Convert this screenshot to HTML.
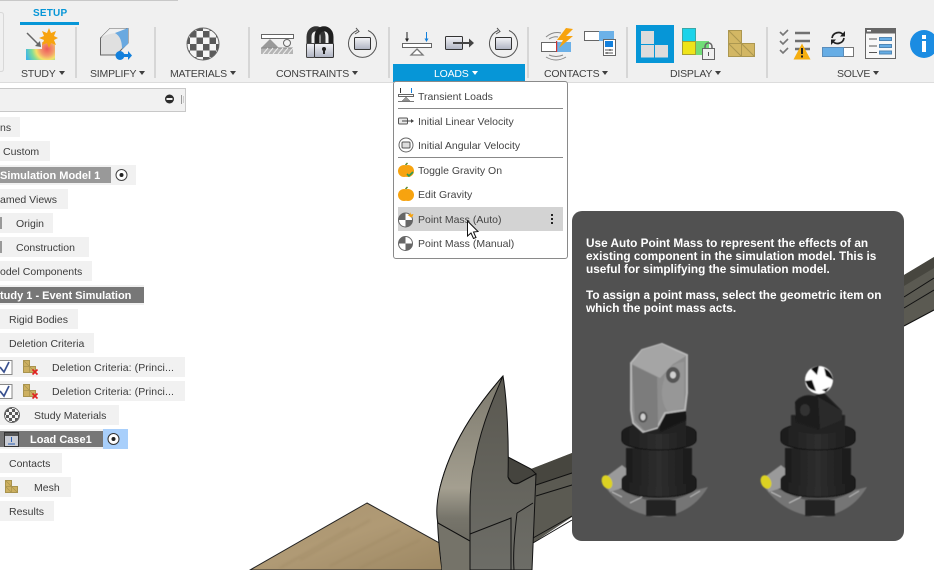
<!DOCTYPE html>
<html><head><meta charset="utf-8"><style>
html,body{margin:0;padding:0;background:#fff;width:934px;height:570px;overflow:hidden}
body{position:relative;font-family:"Liberation Sans",sans-serif;color:#3c3c3c}
svg.l{position:absolute;left:0;top:0}
.t{position:absolute;white-space:nowrap;line-height:14px;font-size:11px}
.lab{position:absolute;top:67px;font-size:10.5px;letter-spacing:-.2px;line-height:12px;color:#3f3f3f;white-space:nowrap;text-align:center}
.lab i{display:inline-block;width:0;height:0;border:3.5px solid transparent;border-top:4px solid currentColor;border-bottom:0;margin-left:3px;vertical-align:2px}
.r{position:absolute;left:0;height:20px;background:#f1f1f1}
.r span{position:absolute;top:4px;font-size:10.5px;line-height:14px;white-space:nowrap;color:#3c3c3c}
.b{position:absolute;left:0}
.b span{font-weight:bold;color:#fff!important}
.m{position:absolute;left:418px;font-size:10.5px;line-height:14px;color:#444;white-space:nowrap}
#tip{position:absolute;left:572px;top:211px;width:332px;height:330px;background:#515151;border-radius:10px}
#tip div{position:absolute;left:14px;font-weight:bold;font-size:11.8px;line-height:13px;color:#fff;white-space:nowrap}
</style></head><body>

<svg class="l" width="934" height="570" viewBox="0 0 934 570">
<defs>
<linearGradient id="wood" x1="0" y1="0" x2="1" y2="1"><stop offset="0" stop-color="#a9946f"/><stop offset=".5" stop-color="#b09a75"/><stop offset="1" stop-color="#9c8762"/></linearGradient>
<linearGradient id="ham" x1="0" y1="0" x2="0" y2="1"><stop offset="0" stop-color="#7b786c"/><stop offset=".68" stop-color="#a49f90"/><stop offset=".86" stop-color="#77756b"/><stop offset="1" stop-color="#6e6c63"/></linearGradient>
<linearGradient id="ham2" x1="0" y1="0" x2="0" y2="1"><stop offset="0" stop-color="#5a5850"/><stop offset="1" stop-color="#6d6d67"/></linearGradient>
<filter id="bw"><feGaussianBlur stdDeviation="1.200"/></filter>
</defs>
<!-- wood -->
<path d="M367 503 L250 570 L445 570 L445 546 Z" fill="url(#wood)" stroke="#222" stroke-width="1"/>
<g stroke="#96815c" stroke-width="1.500" opacity=".45" fill="none" filter="url(#bw)"><path d="M300 560 L370 520M330 566 L400 530M360 568 L420 540M280 568 L350 528"/></g>
<!-- handle -->
<path d="M531 469 L572 453 L904 275 L934 257 L934 310 L904 326 L572 517 L533 543 Z" fill="#5b5a52"/>
<path d="M531 469 L572 453 L904 275 L934 257 L934 268 L904 286 L572 473 L536 485 Z" fill="#47463f"/>
<path d="M536 485 L572 473M536 496 L572 485M533 538 L572 516M533 543 L572 520M904 297 L934 278M904 308 L934 290M904 326 L934 310" stroke="#111" stroke-width="1" fill="none"/>
<!-- block -->
<path d="M508 457 L531 469 L536 474 L519 483 L513 484 L508 477 Z" fill="#45443e" stroke="#111"/>
<!-- head -->
<path d="M503 376 C482 400 455 435 442 480 C436 500 436 525 442 570 L532 570 L536 474 L519 483 C515 485 510 483 508 477 C509 440 507 400 503 376 Z" fill="url(#ham2)" stroke="#111" stroke-width="1"/>
<path d="M438 523L470 541V570H442Z" fill="#757369"/>
<path d="M503 376 C482 400 455 435 442 480 C436 500 436 515 438 523 L470 541 V507 C470 490 472 470 474 465 C479 435 488 410 503 376 Z" fill="url(#ham)" stroke="#111" stroke-width="1"/>
<path d="M438 523 L470 541 V570M470 534 L511 518 V570M517 513 L533 503M517 513 C514 540 513 555 514 570" stroke="#111" stroke-width="1" fill="none"/>

<!-- toolbar -->
<rect x="0" y="0" width="934" height="82" fill="#f0f0f0"/>
<rect x="0" y="82" width="934" height="1" fill="#dcdcdc"/>
<rect x="0" y="0" width="178" height="1" fill="#c8c8c8"/>
<path d="M0 12.5H1Q3.500 12.500 3.500 15V69Q3.500 71.500 1 71.500H0" fill="none" stroke="#d8d8d8"/>
<rect x="20" y="22" width="59" height="3" fill="#0696d7"/>
<g fill="#d6d6d6"><rect x="75" y="27" width="2" height="51"/><rect x="154" y="27" width="2" height="51"/><rect x="248" y="27" width="2" height="51"/><rect x="388" y="27" width="2" height="51"/><rect x="527" y="27" width="2" height="51"/><rect x="626" y="27" width="2" height="51"/><rect x="766" y="27" width="2" height="51"/></g>
<rect x="393" y="64" width="132" height="18" fill="#0696d7"/>

<!-- study -->
<defs><radialGradient id="heat" gradientUnits="userSpaceOnUse" cx="47" cy="49" r="22"><stop offset="0" stop-color="#ee5a5a"/><stop offset=".3" stop-color="#f39a6b"/><stop offset=".5" stop-color="#f4e26a"/><stop offset=".7" stop-color="#7fdc9a"/><stop offset="1" stop-color="#3fb6e6"/></radialGradient></defs>
<path d="M26 49H42V42H55V60H26Z" fill="url(#heat)"/>
<path d="M49 28l2 5 5-2-2 5 4 2-4 2 2 5-5-2-2 5-2-5-5 2 2-5-5-2 5-2-2-5 5 2z" fill="#f7a30f"/>
<path d="M27 33L39 45" stroke="#666" stroke-width="1.500"/><path d="M41 47L40 41L35 46Z" fill="#666"/>
<!-- simplify -->
<path d="M100.500 38L110 28.500H128V43L116 55H100.500Z" fill="#e0e0e0" stroke="#666"/>
<path d="M110 28.500H128L115 33C110 34 104 35 100.500 38Z" fill="#f0f0f0"/>
<path d="M115 33L128 28V44L122 49C122 41 120 36 115 33Z" fill="#6aa9e0"/>
<circle cx="120" cy="55.500" r="4.500" fill="#1380dc"/><path d="M124 54H128V51L132 55.500L128 60V57H124Z" fill="#1380dc"/>
<!-- materials -->
<defs><pattern id="chk" width="13" height="13" patternUnits="userSpaceOnUse" x="196.500" y="37.500"><rect width="13" height="13" fill="#f5f5f5"/><rect width="6.500" height="6.500" fill="#5a5a5a"/><rect x="6.500" y="6.500" width="6.500" height="6.500" fill="#5a5a5a"/></pattern>
<pattern id="chks" width="6" height="6" patternUnits="userSpaceOnUse" x="9" y="412"><rect width="6" height="6" fill="#f5f5f5"/><rect width="3" height="3" fill="#5a5a5a"/><rect x="3" y="3" width="3" height="3" fill="#5a5a5a"/></pattern></defs>
<circle cx="203" cy="44" r="16" fill="url(#chk)" stroke="#666"/>
<!-- constraint 1 -->
<rect x="261.500" y="34.500" width="32" height="4" fill="#fff" stroke="#666"/>
<path d="M270 39L279 48H261Z" fill="#999"/><circle cx="287" cy="43" r="3.500" fill="#f4f4f4" stroke="#666"/>
<rect x="261" y="48" width="32" height="6" fill="#b5b5b5"/>
<path d="M261 48H293" stroke="#888"/>
<path d="M263 54l5-6M268 54l5-6M273 54l5-6M278 54l5-6M283 54l5-6M288 54l5-6" stroke="#eee"/>
<!-- lock -->
<path d="M309 44V37C309 26 323 26 323 37V44" fill="none" stroke="#333" stroke-width="5"/>
<path d="M317 44V37C317 26 331 26 331 37V44" fill="none" stroke="#1f1f1f" stroke-width="5"/>
<rect x="306.500" y="43.500" width="8" height="14" rx="1" fill="url(#g1)" stroke="#444"/>
<rect x="314.500" y="43.500" width="19" height="14" rx="1" fill="url(#g1)" stroke="#333"/>
<circle cx="324" cy="49" r="2" fill="#222"/><rect x="323" y="49" width="2" height="5" fill="#222"/>
<!-- rot -->
<defs><linearGradient id="g1" x1="0" y1="0" x2="0" y2="1"><stop offset="0" stop-color="#f4f4f7"/><stop offset="1" stop-color="#aeb3c2"/></linearGradient></defs>
<g id="rot"><path d="M357 30.500A14 14 0 1 0 368 30.500M367 30.500" fill="none" stroke="#555"/><path d="M356 28L359 31.500L355 34" fill="none" stroke="#555"/><rect x="354.500" y="37.500" width="16" height="12" rx="1" fill="url(#g1)" stroke="#333"/></g>
<!-- loads -->
<path d="M407 32V40M426.500 32V40" stroke="#333"/><path d="M407 32V39" stroke="#222"/><path d="M426.500 32V39" stroke="#1380dc"/>
<path d="M405 38.500L407 42L409 38.500Z" fill="#222"/><path d="M424.500 38.500L426.500 42L428.500 38.500Z" fill="#1380dc"/>
<rect x="402.500" y="43.500" width="29" height="4" fill="#fff" stroke="#666"/>
<path d="M417 49L423 55H411Z" fill="#fff" stroke="#777" stroke-width="1.300"/>
<rect x="445.500" y="36.500" width="17" height="13" rx="1" fill="url(#g1)" stroke="#333"/>
<path d="M453 43H470" stroke="#444" stroke-width="2"/><path d="M469 38.500L474 43L469 47.500Z" fill="#444"/>
<use href="#rot" x="141"/>
<!-- contacts -->
<path d="M546 37Q553 31 561 33M549 39Q554 36 558 37M546 57Q556 63 566 57M549 55Q556 58 563 55" fill="none" stroke="#888"/>
<rect x="541.500" y="42.500" width="15" height="9" fill="#fff" stroke="#666"/>
<rect x="557" y="42" width="14" height="10" fill="#6cb1e8"/>
<rect x="556" y="41" width="1.200" height="11" fill="#d03030"/>
<path d="M566 28L557 40H563L559 48L573 36H566L573 29Z" fill="#f7a30f"/>
<rect x="584.500" y="31.500" width="15" height="9" fill="#fff" stroke="#666"/>
<rect x="599" y="31" width="15" height="10" fill="#6cb1e8"/>
<rect x="603.500" y="39.500" width="12" height="16" fill="#fff" stroke="#666"/>
<rect x="605" y="41" width="8" height="6" fill="#1380dc"/>
<path d="M605 50H613M605 53H613" stroke="#555"/><path d="M610 49V51M607 52V54" stroke="#555"/>
<!-- display -->
<rect x="636" y="25" width="38" height="38" fill="#0696d7"/>
<rect x="641" y="31" width="13" height="13" fill="#dcdcdc"/><rect x="641" y="45" width="13" height="12.500" fill="#dcdcdc"/><rect x="655" y="45" width="13" height="12.500" fill="#dcdcdc"/>
<rect x="682.500" y="28.500" width="13" height="13" fill="#1cd3ea" stroke="#3aa7a7"/>
<rect x="682.500" y="41.500" width="13" height="13" fill="#efe41a" stroke="#a8a030"/>
<rect x="696" y="41" width="13" height="14" fill="#72dd78"/>
<path d="M705 49V47C705 41.500 712 41.500 712 47V49" fill="none" stroke="#666" stroke-width="1.500"/>
<rect x="702.500" y="48.500" width="12" height="11" fill="#f0f0f0" stroke="#666"/>
<rect x="708" y="52" width="1" height="4" fill="#555"/>
<g id="msh"><path d="M728.500 30.500H741.500V43.500H754.500V56.500H728.500Z" fill="#d3b764" stroke="#ac9750"/><path d="M728.500 43.500H741.500V56.500M728.500 30.500L741.500 43.500M728.500 43.500L741.500 56.500M741.500 43.500L754.500 56.500" fill="none" stroke="#ac9750"/></g>
<!-- solve -->
<path d="M780 32L783 35L788 30M780 41L783 44L788 39M780 50L783 53L788 48" fill="none" stroke="#777" stroke-width="1.600"/>
<path d="M795 33H810M795 41H810M795 49H810" stroke="#707070" stroke-width="2.400"/>
<path d="M802 43.500L810.500 59.500H793.500Z" fill="#f5ae10"/><rect x="801" y="48" width="2" height="6" fill="#222"/><rect x="801" y="55.500" width="2" height="2" fill="#222"/>
<path d="M832 38A6.500 6.500 0 0 1 843.500 35M844 38A6.500 6.500 0 0 1 832.500 41" fill="none" stroke="#222" stroke-width="1.700"/>
<path d="M845 31V36.500H840ZM831 45V39.500H836Z" fill="#222"/>
<rect x="822.500" y="47.500" width="31" height="9" fill="#fff" stroke="#777"/><rect x="822.500" y="47.500" width="21" height="9" fill="#66ade5" stroke="#5a8dbb"/>
<rect x="865.500" y="28.500" width="30" height="30" fill="#f8f8f8" stroke="#666"/><rect x="865" y="28" width="31" height="5.500" fill="#666"/><rect x="867" y="30" width="4" height="1.500" fill="#fff"/>
<path d="M869 39H877M869 46H877M869 52.500H877" stroke="#555"/>
<g fill="#66ade5" stroke="#4f86b5"><rect x="879.500" y="37.500" width="12" height="3"/><rect x="879.500" y="44.500" width="12" height="3"/><rect x="879.500" y="51" width="12" height="3"/></g>
<circle cx="924" cy="44" r="14" fill="#1b8ce2"/><rect x="922" y="41" width="4" height="11" fill="#fff"/><rect x="922" y="35" width="4" height="4" fill="#fff"/>

<!-- panel header -->
<rect x="-2" y="88.500" width="187.500" height="23" fill="#f1f1f1" stroke="#c8c8c8"/>
<circle cx="169.500" cy="99" r="4.500" fill="#2b2b2b"/><rect x="166.500" y="98" width="6" height="2" fill="#f1f1f1"/>
<path d="M181.500 95V104" stroke="#999"/><path d="M183.500 96V103" stroke="#ccc"/>
</svg>

<div class="t" style="left:33px;top:6px;font-size:10px;font-weight:bold;color:#0696d7;letter-spacing:.2px;margin-top:1px">SETUP</div>
<div class="lab" style="left:21px;top:68px">STUDY<i></i></div>
<div class="lab" style="left:90px;top:68px">SIMPLIFY<i></i></div>
<div class="lab" style="left:170px;top:68px">MATERIALS<i></i></div>
<div class="lab" style="left:276px;top:68px">CONSTRAINTS<i></i></div>
<div class="lab" style="left:434px;top:68px;color:#fff">LOADS<i></i></div>
<div class="lab" style="left:544px;top:68px">CONTACTS<i></i></div>
<div class="lab" style="left:670px;top:68px">DISPLAY<i></i></div>
<div class="lab" style="left:837px;top:68px">SOLVE<i></i></div>

<!-- tree -->
<div class="r" style="top:117px;width:20px"><span style="left:0">ns</span></div>
<div class="r" style="top:141px;width:50px"><span style="left:3px">Custom</span></div>
<div class="r" style="top:165px;width:136px"></div>
<div class="b" style="top:167px;width:111px;height:16px;background:#999"><span class="t" style="left:0;top:2px">Simulation Model 1</span></div>
<div class="r" style="top:189px;width:68px"><span style="left:0">amed Views</span></div>
<div class="r" style="top:213px;width:53px"><span style="left:16px">Origin</span></div>
<div class="r" style="top:237px;width:89px"><span style="left:16px">Construction</span></div>
<div class="r" style="top:261px;width:92px"><span style="left:0">odel Components</span></div>
<div class="r" style="top:285px;width:144px"></div>
<div class="b" style="top:287px;width:144px;height:16px;background:#777"><span class="t" style="left:0;top:2px">tudy 1 - Event Simulation</span></div>
<div class="r" style="top:309px;width:78px"><span style="left:9px">Rigid Bodies</span></div>
<div class="r" style="top:333px;width:94px"><span style="left:9px">Deletion Criteria</span></div>
<div class="r" style="top:357px;width:185px"><span style="left:52px;letter-spacing:.08px">Deletion Criteria: (Princi...</span></div>
<div class="r" style="top:381px;width:185px"><span style="left:52px;letter-spacing:.08px">Deletion Criteria: (Princi...</span></div>
<div class="r" style="top:405px;width:119px"><span style="left:34px">Study Materials</span></div>
<div class="r" style="top:429px;width:103px"></div>
<div class="b" style="top:429px;left:103px;width:25px;height:20px;background:#a8cffb"></div>
<div class="b" style="top:431px;width:103px;height:16px;background:#777"><span class="t" style="left:30px;top:2px">Load Case1</span></div>
<div class="r" style="top:453px;width:62px"><span style="left:9px">Contacts</span></div>
<div class="r" style="top:477px;width:71px"><span style="left:34px">Mesh</span></div>
<div class="r" style="top:501px;width:54px"><span style="left:9px">Results</span></div>

<svg class="l" width="200" height="570" viewBox="0 0 200 570">
<rect x="0" y="217" width="2" height="12" fill="#999"/><rect x="0" y="241" width="2" height="12" fill="#999"/>
<circle cx="121.500" cy="175" r="5.500" fill="#fff" stroke="#444"/><circle cx="121.500" cy="175" r="2" fill="#222"/>
<circle cx="113.500" cy="439" r="5.500" fill="#fff" stroke="#333"/><circle cx="113.500" cy="439" r="2" fill="#222"/>
<g id="cb"><rect x="-2" y="360.500" width="14" height="14" fill="#fff" stroke="#888"/><path d="M0 367L4 372L9 362" fill="none" stroke="#39508f" stroke-width="1.700"/></g>
<use href="#cb" y="24"/>
<g id="dc"><path d="M23.500 360.500H29.500V366.500H35.500V372.500H23.500Z" fill="#cdb060" stroke="#a8934e"/><path d="M23.500 366.500H29.500V372.500M23.500 360.500L29.500 366.500M29.500 366.500L35.500 372.500" fill="none" stroke="#a8934e" stroke-width=".7"/><path d="M32.500 369.500L37.500 374.500M37.500 369.500L32.500 374.500" stroke="#e02020" stroke-width="1.600"/></g>
<use href="#dc" y="24"/>
<circle cx="12" cy="415" r="7.500" fill="url(#chks)" stroke="#666"/>
<rect x="4.500" y="432.500" width="14" height="14" fill="#c9ccd4" stroke="#333"/><rect x="5" y="433" width="13" height="3" fill="#555"/>
<path d="M11.500 437V442M8 444H15" stroke="#2a5fb5"/>
<path d="M5.500 480.500H11.500V486.500H17.500V492.500H5.500Z" fill="#cdb060" stroke="#a8934e"/><path d="M5.500 486.500H11.500V492.500M5.500 480.500L11.500 486.500M5.500 486.500L11.500 492.500M11.500 486.500L17.500 492.500" fill="none" stroke="#a8934e" stroke-width=".7"/>
</svg>

<!-- menu -->
<div style="position:absolute;left:393px;top:81px;width:173px;height:176px;background:#fff;border:1px solid #8a8a8a;border-radius:3px"></div>
<div style="position:absolute;left:398px;top:207px;width:165px;height:24px;background:#d3d3d3"></div>
<div style="position:absolute;left:398px;top:108px;width:165px;height:1px;background:#888"></div>
<div style="position:absolute;left:398px;top:157px;width:165px;height:1px;background:#888"></div>
<div class="m" style="top:90px">Transient Loads</div>
<div class="m" style="top:115px">Initial Linear Velocity</div>
<div class="m" style="top:139px">Initial Angular Velocity</div>
<div class="m" style="top:164px">Toggle Gravity On</div>
<div class="m" style="top:188px">Edit Gravity</div>
<div class="m" style="top:213px">Point Mass (Auto)</div>
<div class="m" style="top:237px">Point Mass (Manual)</div>
<svg class="l" width="600" height="270" viewBox="0 0 600 270">
<path d="M400.500 88V93M411.500 88V93" stroke="#333"/><path d="M411.500 88V93" stroke="#1380dc"/>
<rect x="398.500" y="94.500" width="15" height="2" fill="#fff" stroke="#666"/><path d="M406 97L410 101H402Z" fill="#999" stroke="#666" stroke-width=".5"/><rect x="398" y="101" width="16" height="1" fill="#777"/>
<rect x="398.500" y="118" width="9" height="6" rx="1" fill="#e8e8e8" stroke="#555"/><path d="M402 121H411" stroke="#444"/><path d="M411 119L414 121L411 123Z" fill="#444"/>
<circle cx="406" cy="145" r="7" fill="none" stroke="#666"/><rect x="402" y="142" width="8" height="6" rx="1" fill="#ddd" stroke="#555"/>
<g id="ap"><circle cx="404" cy="171" r="6" fill="#f7a30f"/><circle cx="408" cy="171" r="6" fill="#f7a30f"/><path d="M405.500 165L407.500 163" stroke="#5b8a2e" stroke-width="1.500"/></g>
<path d="M407 174L409 176L413 172" fill="none" stroke="#2a9a55" stroke-width="1.600"/>
<use href="#ap" y="24"/>
<circle cx="405.500" cy="220" r="7" fill="#fff" stroke="#666"/><path d="M405.500 220H398.500A7 7 0 0 1 405.500 213ZM405.500 220H412.500A7 7 0 0 1 405.500 227Z" fill="#666"/>
<path d="M410 212l1 2.500 2.500-.5-1 2.500-1.500 1-2-1.500-1.500-1 2.500-.5z" fill="#f7a30f"/>
<circle cx="405.500" cy="243.500" r="7" fill="#fff" stroke="#666"/><path d="M405.500 243.500H398.500A7 7 0 0 1 405.500 236.500ZM405.500 243.500H412.500A7 7 0 0 1 405.500 250.500Z" fill="#666"/>
<g fill="#222"><rect x="551" y="214" width="2" height="2"/><rect x="551" y="218" width="2" height="2"/><rect x="551" y="222" width="2" height="2"/></g>
<path d="M467.500 221V236L471 233L473.500 238.500L476 237.500L473.500 232L478 231.500Z" fill="#fff" stroke="#111"/>
</svg>

<!-- tooltip -->
<div id="tip">
<div style="top:26px">Use Auto Point Mass to represent the effects of an</div>
<div style="top:39px">existing component in the simulation model. This is</div>
<div style="top:52px">useful for simplifying the simulation model.</div>
<div style="top:78px">To assign a point mass, select the geometric item on</div>
<div style="top:91px">which the point mass acts.</div>
</div>
<svg class="l" width="934" height="570" viewBox="0 0 934 570">
<defs>
<filter id="bl"><feGaussianBlur stdDeviation=".6"/></filter>
<linearGradient id="bd" x1="0" y1="0" x2="1" y2="0"><stop offset="0" stop-color="#1c1c1c"/><stop offset=".5" stop-color="#2e2e2e"/><stop offset="1" stop-color="#1a1a1a"/></linearGradient>
<g id="act" filter="url(#bl)">
<path d="M603 484L622 490Q660 512 696 490L708 487Q692 514 660 517Q624 515 603 484Z" fill="#757575"/>
<path d="M630 503L642 497M690 497L700 491M612 492L622 497" stroke="#bbb" fill="none"/>
<path d="M646 500H676V516H646Z" fill="#222"/>
<path d="M603 479L622 465L628 470L625 487L610 492Z" fill="#9a9a9a"/>
<ellipse cx="607" cy="482" rx="5" ry="7" fill="#dcd220" transform="rotate(-25 607 482)"/>
<path d="M622 480A37 10 0 0 1 696 480V487A37 10 0 0 1 622 487Z" fill="url(#bd)" stroke="#111"/>
<path d="M626 448H692V478A33 9 0 0 1 626 478Z" fill="url(#bd)"/>
<path d="M622 433A37 10 0 0 1 696 433V440A37 10 0 0 1 622 440Z" fill="url(#bd)" stroke="#111"/>
<path d="M632 415H686V426A27 8 0 0 1 632 426Z" fill="#222"/>
</g>
</defs>
<use href="#act"/>
<g filter="url(#bl)">
<path d="M660 414L686 411V420L660 432Z" fill="#141414"/>
<path d="M631 363L642 350L662 344L687 355V393L685 410L665 413L657 428L643 432L633 423L631 410Z" fill="#8d8d8d" stroke="#b8b8b8" stroke-width="2"/>
<path d="M632 365L657 377L658 427L645 431L635 420Z" fill="#7c7c7c"/>
<path d="M642 350L662 344L686 356L673 364L660 378L632 364Z" fill="#a5a5a5"/>
<path d="M664 380C666 366 678 362 684 362V408L668 412C662 404 660 392 664 380Z" fill="#979797"/>
<ellipse cx="673" cy="375" rx="7" ry="8" fill="#555"/><ellipse cx="673" cy="375" rx="3" ry="3.500" fill="#d0d0d0"/>
<ellipse cx="643" cy="417" rx="4.500" ry="5.500" fill="#4f4f4f"/><ellipse cx="643" cy="417" rx="2.500" ry="3.500" fill="#cfcfcf"/>
</g>
<use href="#act" x="159"/>
<g filter="url(#bl)">
<path d="M795 402Q802 393 815 396L822 391L842 411V420L818 429L796 422Z" fill="#1b1b1b"/>
<path d="M818 397L842 411V420L820 429Z" fill="#2c2c2c"/>
<ellipse cx="805" cy="410" rx="5" ry="6" fill="#333"/>
<circle cx="819" cy="380" r="14" fill="#fff"/>
<path d="M811 369A14 14 0 0 1 819 366L817 375ZM824 368A14 14 0 0 1 833 380L826 376ZM805 381L812 380L816 391A14 14 0 0 1 808 387ZM822 390L830 387L826 392Z" fill="#111"/>
</g>
</svg>
</body></html>
